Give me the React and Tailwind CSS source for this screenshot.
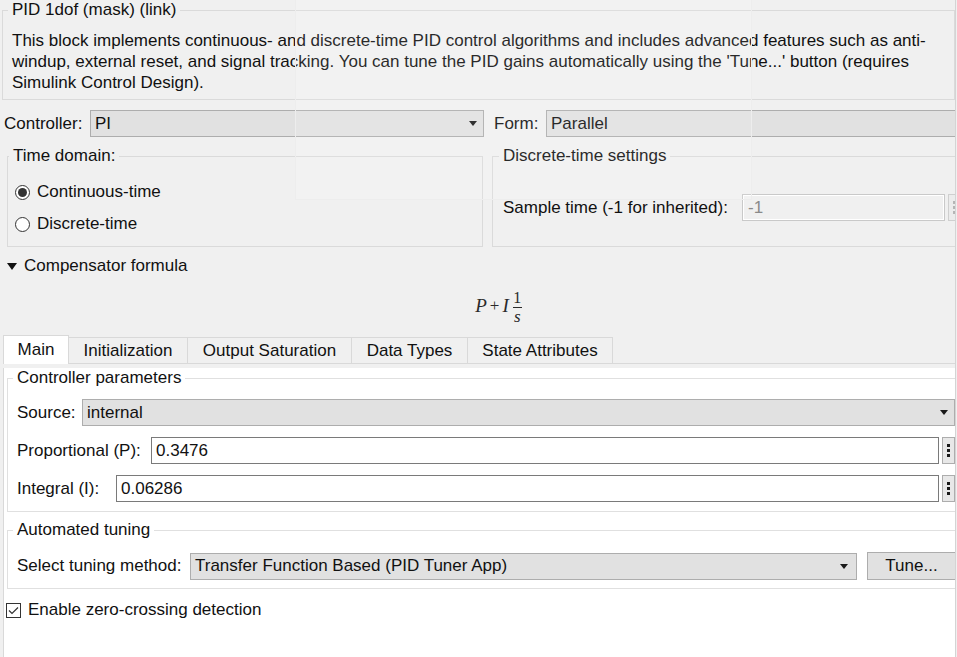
import React from "react";

const Arrow = () => (
  <svg width="8" height="5" viewBox="0 0 8 5" className="shrink-0">
    <polygon points="0,0 8,0 4,5" fill="#1a1a1a" />
  </svg>
);

const DotsButton = ({ disabled }) => (
  <div
    className={
      "flex w-[13px] h-[27px] shrink-0 flex-col items-center justify-center gap-[2px] border " +
      (disabled ? "border-[#cfcfcf] bg-[#ececec]" : "border-[#adadad] bg-[#e8e8e8]")
    }
  >
    <span className={"block w-[3px] h-[3px] " + (disabled ? "bg-[#b5b5b5]" : "bg-[#1a1a1a]")} />
    <span className={"block w-[3px] h-[3px] " + (disabled ? "bg-[#b5b5b5]" : "bg-[#1a1a1a]")} />
    <span className={"block w-[3px] h-[3px] " + (disabled ? "bg-[#b5b5b5]" : "bg-[#1a1a1a]")} />
  </div>
);

const Select = ({ value, className }) => (
  <div
    className={
      "flex h-[27px] items-center justify-between border border-[#adadad] bg-[#e1e1e1] pl-[4px] pr-[6px] " +
      className
    }
  >
    <span>{value}</span>
    <Arrow />
  </div>
);

const Radio = ({ checked, label }) => (
  <div className="flex h-[22px] items-center">
    <span className="flex w-[15px] h-[15px] items-center justify-center rounded-full border border-[#333] bg-white">
      {checked && <span className="block w-[9px] h-[9px] rounded-full bg-[#333]" />}
    </span>
    <span className="ml-[7px]">{label}</span>
  </div>
);

export default function App() {
  return (
    <div className="relative w-[957px] h-[657px] overflow-hidden bg-[#f0f0f0] font-['Liberation_Sans',Arial,sans-serif] text-[17px] leading-[20px] text-[#111]">
      <div className="w-[956px] h-[657px] overflow-hidden border-r border-[#d4d4d4]">
        {/* Block description */}
        <fieldset className="ml-[2px] w-[953px] border border-[#dadada]">
          <legend className="ml-[5px] px-[4px] leading-[20px]">PID 1dof (mask) (link)</legend>
          <p className="mt-[10px] pl-[9px] pb-[6px] whitespace-nowrap leading-[21px]">
            This block implements continuous- and discrete-time PID control algorithms and includes advanced features such as anti-
            <br />
            windup, external reset, and signal tracking. You can tune the PID gains automatically using the 'Tune...' button (requires
            <br />
            Simulink Control Design).
          </p>
        </fieldset>

        {/* Controller / Form */}
        <div className="mt-[10px] flex h-[27px] items-center">
          <span className="w-[90px] pl-[4px] shrink-0">Controller:</span>
          <Select value="PI" className="w-[394px] shrink-0" />
          <span className="ml-[10px] w-[52px] shrink-0">Form:</span>
          <div className="flex h-[27px] w-[420px] shrink-0 items-center border border-[#adadad] bg-[#e1e1e1] pl-[4px]">
            Parallel
          </div>
        </div>

        {/* Time domain + discrete settings */}
        <div className="mt-[9px] flex items-stretch">
          <fieldset className="ml-[7px] w-[476px] shrink-0 border border-[#dadada]">
            <legend className="ml-[1px] px-[4px] leading-[20px]">Time domain:</legend>
            <div className="pl-[7px] pt-[15px] pb-[11px]">
              <Radio checked label="Continuous-time" />
              <div className="mt-[10px]">
                <Radio label="Discrete-time" />
              </div>
            </div>
          </fieldset>
          <fieldset className="ml-[9px] w-[464px] shrink-0 border border-[#dadada]">
            <legend className="ml-[6px] px-[4px] leading-[20px]">Discrete-time settings</legend>
            <div className="flex h-[27px] items-center mt-[28px] pl-[10px]">
              <span className="w-[239px] shrink-0">Sample time (-1 for inherited):</span>
              <div className="flex h-[27px] w-[203px] shrink-0 items-center border border-[#c9c9c9] bg-[#f0f0f0] pl-[5px] text-[#8a8a8a] shadow-[inset_0_0_0_1px_#ffffff]">
                -1
              </div>
              <div className="ml-[3px]">
                <DotsButton disabled />
              </div>
            </div>
          </fieldset>
        </div>

        {/* Compensator formula */}
        <div className="mt-[8px] flex h-[22px] items-center pl-[7px]">
          <svg width="10" height="7" viewBox="0 0 10 7">
            <polygon points="0,0 10,0 5,7" fill="#111" />
          </svg>
          <span className="ml-[7px]">Compensator formula</span>
        </div>
        <div className="mt-[9px] flex h-[40px] items-center justify-center pl-[42px] font-['Liberation_Serif','Times_New_Roman',serif] text-[#2a2a2a]">
          <span className="text-[19px] italic">P</span>
          <span className="mx-[3px] text-[17px]">+</span>
          <span className="text-[19px] italic">I</span>
          <span className="ml-[4px] flex flex-col items-center">
            <span className="text-[16px] leading-[15px]">1</span>
            <span className="my-[2px] block h-[1px] w-[9px] bg-[#2a2a2a]" />
            <span className="text-[17px] leading-[13px] italic">s</span>
          </span>
        </div>

        {/* Tabs */}
        <div className="ml-[3px] mt-[9px] flex h-[29px] items-end">
          <div className="flex h-[29px] w-[66px] items-center justify-center border-l border-r border-t border-[#d9d9d9] bg-white">
            Main
          </div>
          <div className="flex h-[27px] w-[119px] items-center justify-center border-b border-r border-t border-[#d9d9d9]">
            Initialization
          </div>
          <div className="flex h-[27px] w-[164px] items-center justify-center border-b border-r border-t border-[#d9d9d9]">
            Output Saturation
          </div>
          <div className="flex h-[27px] w-[116px] items-center justify-center border-b border-r border-t border-[#d9d9d9]">
            Data Types
          </div>
          <div className="flex h-[27px] w-[145px] items-center justify-center border-b border-r border-t border-[#d9d9d9]">
            State Attributes
          </div>
          <div className="h-[27px] flex-1 border-b border-[#d9d9d9]" />
        </div>

        {/* Tab panel */}
        <div className="ml-[3px] h-[292px] border-b border-l border-[#d9d9d9] bg-white">
          <fieldset className="ml-[3px] mt-[4px] w-[950px] border border-[#e0e0e0]">
            <legend className="ml-[5px] px-[4px] leading-[20px]">Controller parameters</legend>
            <div className="pl-[9px] pr-[1px] pt-[11px] pb-[9px]">
              <div className="flex h-[27px] items-center">
                <span className="w-[65px] shrink-0">Source:</span>
                <Select value="internal" className="flex-1" />
              </div>
              <div className="mt-[11px] flex h-[27px] items-center">
                <span className="w-[134px] shrink-0">Proportional (P):</span>
                <div className="flex h-[27px] flex-1 items-center border border-[#7a7a7a] bg-white pl-[4px]">0.3476</div>
                <div className="ml-[3px]">
                  <DotsButton />
                </div>
              </div>
              <div className="mt-[11px] flex h-[27px] items-center">
                <span className="w-[99px] shrink-0">Integral (I):</span>
                <div className="flex h-[27px] flex-1 items-center border border-[#7a7a7a] bg-white pl-[4px]">0.06286</div>
                <div className="ml-[3px]">
                  <DotsButton />
                </div>
              </div>
            </div>
          </fieldset>

          <fieldset className="ml-[3px] mt-[8px] w-[950px] border border-[#e0e0e0]">
            <legend className="ml-[5px] px-[4px] leading-[20px]">Automated tuning</legend>
            <div className="flex h-[28px] items-center pl-[9px] mt-[12px] mb-[8px]">
              <span className="w-[173px] shrink-0">Select tuning method:</span>
              <Select value="Transfer Function Based (PID Tuner App)" className="w-[667px] shrink-0 pr-[8px]" />
              <div className="ml-[10px] flex h-[28px] flex-1 items-center justify-center border border-[#adadad] bg-[#e1e1e1]">
                Tune...
              </div>
            </div>
          </fieldset>

          <div className="ml-[2px] mt-[10px] flex h-[22px] items-center">
            <span className="flex w-[15px] h-[15px] items-center justify-center border border-[#333] bg-white">
              <svg width="11" height="9" viewBox="0 0 11 9">
                <polyline points="1,4.5 4,7.5 10,1.5" fill="none" stroke="#333" strokeWidth="1.2" />
              </svg>
            </span>
            <span className="ml-[7px]">Enable zero-crossing detection</span>
          </div>
        </div>
      </div>

      {/* faint ghost window over the top area */}
      <div className="pointer-events-none absolute left-[295px] top-0 h-[200px] w-[457px] border-b border-l border-r border-[#ededed] bg-white/10" />
    </div>
  );
}
